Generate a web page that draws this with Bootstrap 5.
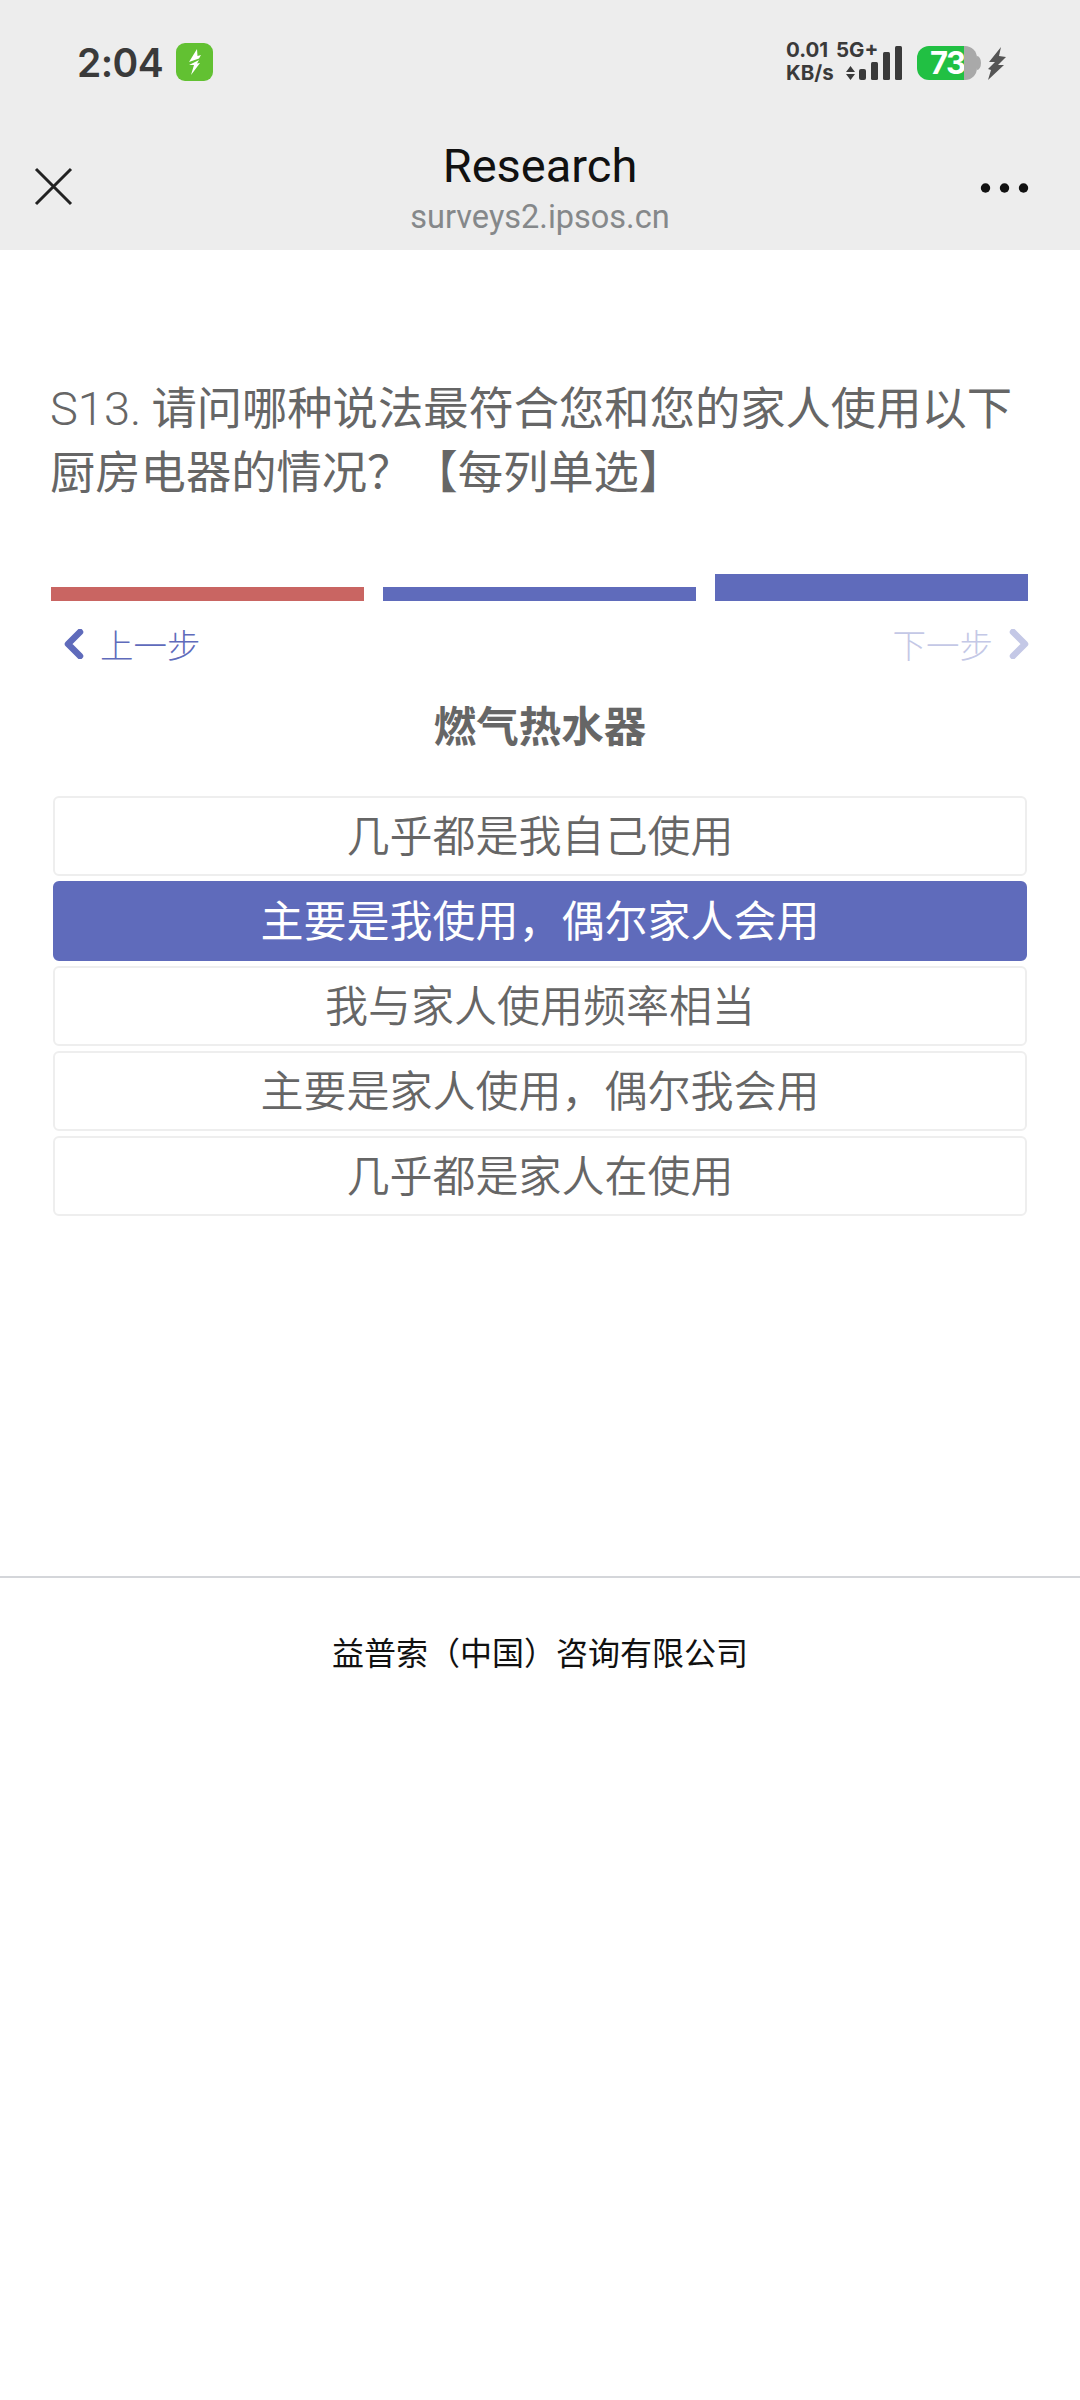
<!DOCTYPE html>
<html lang="zh-CN">
<head>
  <meta charset="UTF-8">
  <title>Research</title>
  <link href="https://cdn.jsdelivr.net/npm/bootstrap@5.3.0/dist/css/bootstrap.min.css" rel="stylesheet">
  <style>
    body { width: 1080px; height: 2400px; overflow: hidden; background: #fff; font-family: "Noto Sans CJK SC", "Noto Sans", sans-serif; }
    .top-area { background: #ededed; height: 250px; }
    .status-row { height: 124px; padding: 0 0 0 77px; }
    .clock { font-family: Inter, Roboto, sans-serif; font-weight: 600; font-size: 39px; color: #3a3a3a; line-height: 1; letter-spacing: -.6px; }
    .app-badge { width: 37px; height: 38px; margin-left: 13px; border-radius: 9px; background: #62c132; }
    .net-speed { font-family: Inter, Roboto, sans-serif; font-weight: 700; color: #3a3a3a; font-size: 20.5px; line-height: 23px; left: 786px; top: 38px; white-space: nowrap; word-spacing: 3px; }
    .signal-icon { left: 845px; top: 46px; }
    .battery-wrap { left: 917px; top: 46px; }
    .battery-pill { width: 47px; height: 34px; background: #21c043; border-radius: 12px 0 0 12px; color: #fff; font-family: Inter, Roboto, sans-serif; font-weight: 700; font-size: 31px; line-height: 34px; padding-left: 13px; letter-spacing: -1.5px; white-space: nowrap; }
    .battery-rest { width: 13px; height: 34px; background: #a9a9a9; border-radius: 0 12px 12px 0; }
    .charge-icon { left: 988px; top: 47px; }
    .title-row { height: 126px; }
    .close-icon { left: 34px; top: 43px; }
    .more-icon { left: 980px; top: 58px; }
    .page-title { font-family: Roboto, sans-serif; font-size: 47px; line-height: 56px; color: #111; padding-top: 14px; }
    .page-host { font-family: Roboto, sans-serif; font-size: 32.5px; line-height: 36px; color: #85888a; margin-top: 5px; }
    .question { margin: 123px 0 0 50px; width: 980px; font-size: 45.3px; line-height: 64px; color: #666; font-weight: 400; }
    .question-no { font-family: Roboto, sans-serif; font-weight: 300; font-size: 47px; line-height: 1; }
    .step-bars { margin: 73px 51px 0 51px; height: 27px; gap: 19px; }
    .step-bar { width: 313px; height: 14px; background: #5f6bbb; }
    .step-one { background: #c96562; }
    .step-three { height: 27px; }
    .step-links { margin: 17px 51px 0 64px; height: 52px; font-size: 33.5px; line-height: 52px; font-weight: 300; }
    .step-back { color: #5f6bbb; gap: 16px; }
    .step-next { color: #c4c8e6; gap: 16px; }
    .group-title { margin-top: 24px; font-size: 42.5px; line-height: 60px; font-weight: 700; color: #666; text-align: center; }
    .option-list { margin: 42px 53px 0; gap: 5px; }
    .option-item { height: 80px; font-size: 43px; line-height: 70px; color: #666; font-weight: 350; text-align: center; border: 2px solid #eeeeee; border-radius: 6px; background: #fff; }
    .option-item.chosen { background: #5f6bbb; border-color: #5f6bbb; color: #fff; font-weight: 400; }
    .page-foot { margin-top: 360px; border-top: 2px solid #d4d6da; padding-top: 48px; font-size: 32px; line-height: 50px; color: #111; text-align: center; }
  </style>
</head>
<body>

  <!-- Status bar and web view header -->
  <div class="top-area">
    <div class="status-row d-flex align-items-center position-relative">
      <span class="clock">2:04</span>
      <span class="app-badge d-flex align-items-center justify-content-center">
        <svg width="14" height="26" viewBox="0 0 14 26"><path d="M9 0 1 13l10-3.500L13 6 9.500 7ZM11 11 1 16h5L3 26l9-12-3 .5Z" fill="#fff"/></svg>
      </span>
      <div class="net-speed position-absolute"><div>0.01 5G+</div><div>KB/s</div></div>
      <svg class="signal-icon position-absolute" width="58" height="34" viewBox="0 0 58 34">
        <path d="M1 26 5.500 20 10 26ZM1 28h9l-4.500 6Z" fill="#3a3a3a"/>
        <rect x="14" y="23" width="7" height="11" rx="2" fill="#3a3a3a"/>
        <rect x="26" y="16" width="7" height="18" rx="1.500" fill="#3a3a3a"/>
        <rect x="38" y="6" width="7" height="28" rx="1.500" fill="#3a3a3a"/>
        <rect x="50" y="0" width="7" height="34" rx="1.500" fill="#3a3a3a"/>
      </svg>
      <div class="battery-wrap position-absolute d-flex align-items-center">
        <span class="battery-pill">73</span><span class="battery-rest"></span>
        <svg width="4" height="14" viewBox="0 0 4 14"><path d="M0 0a4 7 0 0 1 0 14Z" fill="#a9a9a9"/></svg>
      </div>
      <svg class="charge-icon position-absolute" width="18" height="33" viewBox="0 0 18 33"><path d="M13 0 1 15h6L0 22l3 1-3 10 16-15h-6l8-8-7-1Z" fill="#555"/></svg>
    </div>
    <div class="title-row position-relative text-center">
      <svg class="close-icon position-absolute" width="40" height="40" viewBox="0 0 40 40"><path d="M2 2 37 37M37 2 2 37" stroke="#222" stroke-width="3" fill="none"/></svg>
      <div class="page-title">Research</div>
      <div class="page-host">surveys2.ipsos.cn</div>
      <svg class="more-icon position-absolute" width="50" height="12" viewBox="0 0 50 12"><circle cx="5.500" cy="6" r="4.700" fill="#111"/><circle cx="24.500" cy="6" r="4.700" fill="#111"/><circle cx="43.500" cy="6" r="4.700" fill="#111"/></svg>
    </div>
  </div>

  <!-- Survey question -->
  <div class="question"><span class="question-no">S13.</span> 请问哪种说法最符合您和您的家人使用以下厨房电器的情况？【每列单选】</div>

  <div class="step-bars d-flex align-items-end">
    <div class="step-bar step-one"></div>
    <div class="step-bar step-two"></div>
    <div class="step-bar step-three"></div>
  </div>

  <div class="step-links d-flex justify-content-between">
    <span class="step-back d-flex align-items-center">
      <svg width="20" height="30" viewBox="0 0 20 30"><path d="M16 3 4 15l12 12" stroke="#5f6bbb" stroke-width="6.500" stroke-linecap="round" stroke-linejoin="round" fill="none"/></svg>
      上一步
    </span>
    <span class="step-next d-flex align-items-center">
      下一步
      <svg width="20" height="30" viewBox="0 0 20 30"><path d="M4 3l12 12L4 27" stroke="#c4c8e6" stroke-width="6.500" stroke-linecap="round" stroke-linejoin="round" fill="none"/></svg>
    </span>
  </div>

  <div class="group-title">燃气热水器</div>

  <div class="option-list d-flex flex-column">
    <div class="option-item">几乎都是我自己使用</div>
    <div class="option-item chosen">主要是我使用，偶尔家人会用</div>
    <div class="option-item">我与家人使用频率相当</div>
    <div class="option-item">主要是家人使用，偶尔我会用</div>
    <div class="option-item">几乎都是家人在使用</div>
  </div>

  <div class="page-foot">益普索（中国）咨询有限公司</div>

  <script src="https://cdn.jsdelivr.net/npm/bootstrap@5.3.0/dist/js/bootstrap.bundle.min.js"></script>
</body>
</html>
